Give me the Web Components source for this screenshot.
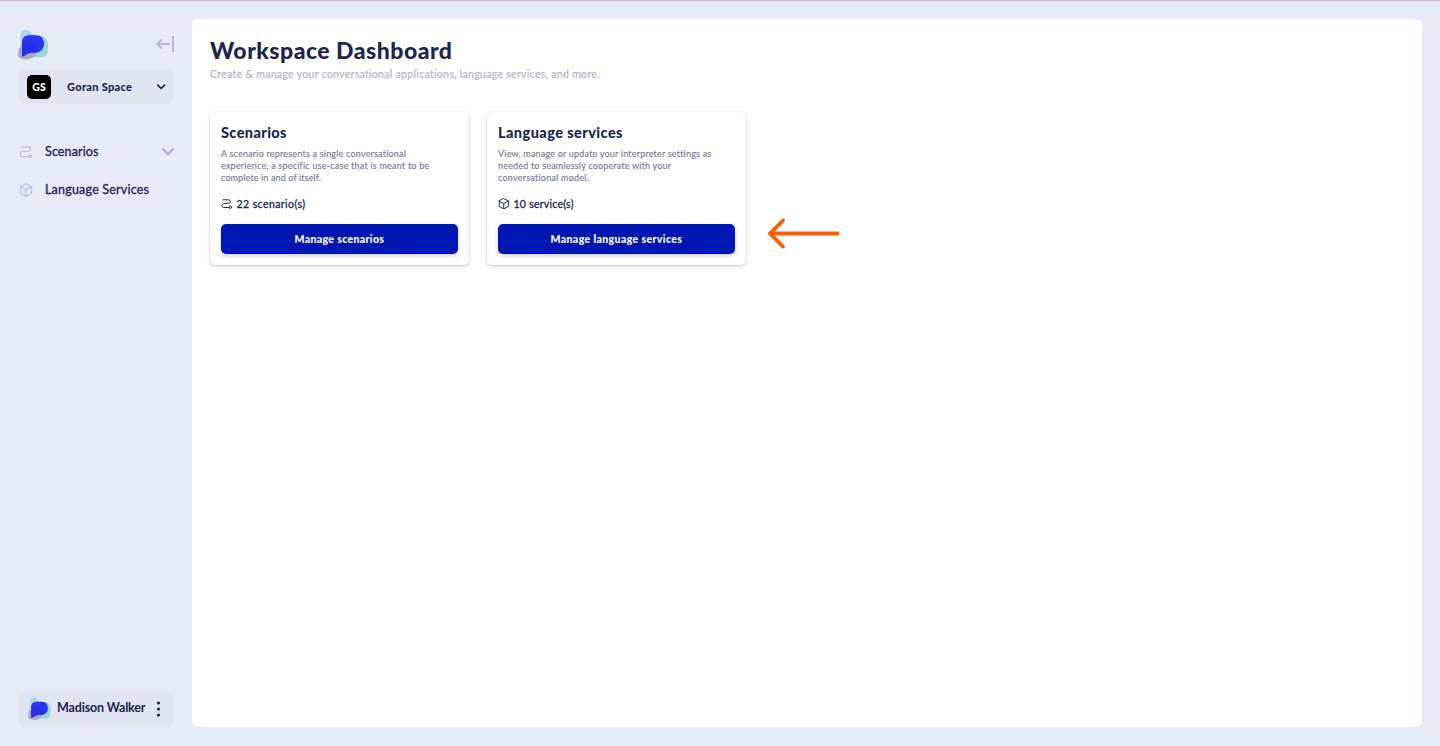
<!DOCTYPE html>
<html lang="en">
<head>
<meta charset="utf-8">
<title>Workspace Dashboard</title>
<style>
html,body{margin:0;height:100%;overflow:hidden}
body{font-family:Lato,"Open Sans",sans-serif;color:#1b264f;background:#e7ebf7}
</style>
</head>
<body>
<app-shell>
  <side-bar slot="side">
    <workspace-picker slot="top" initials="GS"><fit-text width="65">Goran Space</fit-text></workspace-picker>
    <nav-item icon="route" expandable><fit-text width="53.5">Scenarios</fit-text></nav-item>
    <nav-item icon="cube"><fit-text width="104">Language Services</fit-text></nav-item>
    <user-box slot="bottom"><fit-text width="88.5">Madison Walker</fit-text></user-box>
  </side-bar>
  <page-header><fit-text width="242">Workspace Dashboard</fit-text><fit-text slot="sub" width="390">Create &amp; manage your conversational applications, language services, and more.</fit-text></page-header>
  <card-row>
    <info-card icon="route">
      <fit-text slot="title" width="65.5">Scenarios</fit-text>
      <fit-text width="185">A scenario represents a single conversational</fit-text>
      <fit-text width="208">experience, a specific use-case that is meant to be</fit-text>
      <fit-text width="100">complete in and of itself.</fit-text>
      <fit-text slot="count" width="68.5">22 scenario(s)</fit-text>
      <fit-text slot="action" width="89.5">Manage scenarios</fit-text>
    </info-card>
    <info-card icon="cube">
      <fit-text slot="title" width="124.5">Language services</fit-text>
      <fit-text width="213">View, manage or update your interpreter settings as</fit-text>
      <fit-text width="173">needed to seamlessly cooperate with your</fit-text>
      <fit-text width="91">conversational model.</fit-text>
      <fit-text slot="count" width="60">10 service(s)</fit-text>
      <fit-text slot="action" width="131.5">Manage language services</fit-text>
    </info-card>
    <pointer-arrow></pointer-arrow>
  </card-row>
</app-shell>
<script>
const define = (name, html, init) => {
  const t = document.createElement('template');
  t.innerHTML = html;
  customElements.define(name, class extends HTMLElement {
    connectedCallback() {
      if (this.shadowRoot) return;
      this.attachShadow({mode: 'open'}).append(t.content.cloneNode(true));
      if (init) init(this, this.shadowRoot);
    }
  });
};

const GLYPHS = {
  cube: '<path d="M7 .7 12.600 3.700v6.600L7 13.300 1.400 10.300V3.700ZM1.400 3.700 7 6.800l5.600-3.100M7 6.800v6.500"/>',
  route: '<path d="M2.800 2.200h6.400a1.900 1.900 0 0 1 0 4.300H3.300a2.600 2.600 0 0 0 0 5.100H9.800"/><circle cx="11.300" cy="11.300" r="1.500"/>'
};
customElements.define('line-icon', class extends HTMLElement {
  static observedAttributes = ['name'];
  constructor() {
    super();
    this.attachShadow({mode: 'open'}).innerHTML = '<style>:host{display:block}svg{display:block;width:100%;height:100%;fill:none;stroke:currentColor;stroke-width:var(--stroke,1.2);stroke-linecap:round;stroke-linejoin:round}</style><svg viewBox="0 0 14 14"></svg>';
  }
  attributeChangedCallback(_, __, value) {
    this.shadowRoot.querySelector('svg').innerHTML = GLYPHS[value] || '';
  }
});

define('app-shell', `<style>
:host{display:flex;box-sizing:border-box;width:1440px;height:746px;border-top:1px solid #d4b9c8;border-bottom:1px solid #f3f5fb;background:#e7ebf7}
main{box-sizing:border-box;width:1230px;height:708px;margin-top:18px;padding:17px 18px;border-radius:6px;background:#fff}
</style><slot name="side"></slot><main><slot></slot></main>`);

define('side-bar', `<style>
:host{display:flex;flex-direction:column;box-sizing:border-box;width:192px;height:100%;padding:28px 18px 18px}
header{display:flex;justify-content:space-between;height:41px}
header svg{display:block;margin-top:7px}
nav{flex:1;padding-top:29.500px}
</style>
<header><brand-mark></brand-mark>
<svg width="19" height="17" viewBox="0 0 19 17" fill="none" stroke="#b6b3d4" stroke-width="2"><path d="M14.300 8H2.500M6.300 4.200 2.200 8l4.100 3.800" stroke-linecap="round" stroke-linejoin="round"/><path d="M18 0v16"/></svg></header>
<slot name="top"></slot><nav><slot></slot></nav><slot name="bottom"></slot>`);

define('brand-mark', `<style>:host{display:block;width:30px;height:31px}svg{display:block;width:100%;height:100%}</style>
<svg viewBox="0 0 30 31">
<path d="M4.2 1.5C8.5-1.5 12 3 16 5.8c4.6 3.2 6.6 8.5 2.6 13C15 22.8 7 21 4 16 1.7 12 1.8 4.3 4.2 1.5Z" fill="#aed3f3"/>
<path d="M21.500 7.600C27 6 30 11 30 17c0 7-1.200 11-6 11.200C17.600 29 13 27 14 21Z" fill="#9dd6d5"/>
<path d="M4.2 15.500C9 13 17 16 18.600 21c2 5.600-4.500 9.300-10.500 9.300C3 30.300 0 29 0 25.500c0-4 1.500-8 4.200-10Z" fill="#aaa8c8"/>
<path d="M4 27.500V13C4 8.500 7 6.200 11.500 6.200h7c4.800 0 7.500 3.700 7.500 8.600 0 5.200-3.500 8.900-9 8.900h-4C9 23.900 6.800 27.500 4 27.500Z" fill="#2c35f4"/>
<path d="M4 27.500V13.500c6-3.500 14 .5 14.800 7 .1 1 .1 2 0 3.100H13C9 23.900 6.800 27.500 4 27.500Z" fill="#2329e6" opacity=".6"/>
<path d="M13 13c5-2 9 2 12 5-1.500 3.500-4 5.500-8 5.500h-3c-2-3-3-7-1-10.500Z" fill="#1c3bdc" opacity=".3"/>
</svg>`);

define('workspace-picker', `<style>
:host{display:flex;align-items:center;box-sizing:border-box;height:34px;padding:0 8px 0 9px;border-radius:6px;background:#dfe5f1;font:900 11px/14px Lato,sans-serif}
i{font:900 10.500px/24px Lato,sans-serif;width:24px;height:24px;margin-right:16px;border-radius:5px;background:#000;color:#fff;text-align:center}
svg{margin-left:auto}
</style><i></i><slot></slot><svg width="10" height="8" viewBox="0 0 10 8" fill="none" stroke="#1b264f" stroke-width="1.700" stroke-linecap="round" stroke-linejoin="round"><path d="M1.800 2.200 5.200 5.500 8.600 2.200"/></svg>`,
(h, r) => r.querySelector('i').textContent = h.getAttribute('initials'));

define('nav-item', `<style>
:host{display:flex;align-items:center;height:37.500px;font-size:12.500px;line-height:16px;-webkit-text-stroke:.3px currentColor}
line-icon{width:14px;height:14px;margin:0 12px 0 1px;color:#bebcda}
svg{margin-left:auto}
</style><line-icon></line-icon><slot></slot>`,
(h, r) => {
  r.querySelector('line-icon').setAttribute('name', h.getAttribute('icon'));
  if (h.hasAttribute('expandable')) r.append(document.createRange().createContextualFragment('<svg width="12" height="8" viewBox="0 0 12 8" fill="none" stroke="#b3b0d2" stroke-width="2.500" stroke-linecap="round" stroke-linejoin="round"><path d="M1.300 1.500 6 6.100l4.700-4.600"/></svg>'));
});

define('user-box', `<style>
:host{display:flex;align-items:center;box-sizing:border-box;height:36px;padding:0 13px 0 10px;border-radius:6px;background:#dfe5f1;font-weight:700;font-size:12.500px;line-height:16px}
brand-mark{width:23px;height:23.500px;margin-right:6px}
::slotted(*){margin-bottom:2px}
svg{margin-left:auto}
</style><brand-mark></brand-mark><slot></slot><svg width="5" height="16" viewBox="0 0 5 16" fill="#1b264f"><circle cx="2.500" cy="2" r="1.600"/><circle cx="2.500" cy="8" r="1.600"/><circle cx="2.500" cy="14" r="1.600"/></svg>`);

define('page-header', `<style>
:host{display:block;height:75.500px}
h1{margin:0;font:900 23px/28px Lato,sans-serif;height:30px}
p{margin:0;font-size:10.500px;line-height:17px;color:#b6b3d1;-webkit-text-stroke:.2px currentColor}
</style><h1><slot></slot></h1><p><slot name="sub"></slot></p>`);

define('card-row', `<style>:host{display:flex;gap:18px}</style><slot></slot>`);

define('info-card', `<style>
:host{display:block;box-sizing:border-box;width:259px;height:153.500px;padding:11px;border-radius:5px;background:#fff;box-shadow:0 1px 3px rgba(40,45,90,.24),0 1px 2px rgba(40,45,90,.08)}
h2{margin:0 0 5px;font:900 14.500px/20px Lato,sans-serif}
p{display:flex;flex-direction:column;align-items:flex-start;margin:0;font-size:9px;line-height:12px;color:#777d9b;-webkit-text-stroke:.15px currentColor}
div{display:flex;align-items:center;gap:4px;height:14px;margin:13px 0;font-size:10.500px;line-height:14px;-webkit-text-stroke:.3px currentColor}
line-icon{width:11.500px;height:11.500px}
button{display:flex;align-items:center;justify-content:center;width:236.500px;height:30px;padding:0;border:0;border-radius:5px;background:#0017b5;color:#fff;font:900 10.500px/14px Lato,sans-serif;box-shadow:0 2px 4px rgba(40,45,90,.22)}
</style><h2><slot name="title"></slot></h2><p><slot></slot></p><div><line-icon></line-icon><slot name="count"></slot></div><button><slot name="action"></slot></button>`,
(h, r) => r.querySelector('line-icon').setAttribute('name', h.getAttribute('icon')));

define('pointer-arrow', `<style>:host{display:block;margin:106.500px 0 0 4px}svg{display:block}</style>
<svg width="72" height="31" viewBox="0 0 72 31" fill="none" stroke="#ff5c00" stroke-width="4"><path d="M71 15.500H2.500"/><path d="M15 2.500 2 15.500l13 13" stroke-width="3.800" stroke-linecap="round" stroke-linejoin="round"/></svg>`);

/* Tracks a single line of text out to its intended measure. */
define('fit-text', `<style>:host{display:inline-block;white-space:nowrap;font-kerning:normal}span{display:inline-block}</style><span><slot></slot></span>`,
(h, r) => {
  const s = r.querySelector('span'), n = h.textContent.length, w = +h.getAttribute('width');
  const natural = s.getBoundingClientRect().width;
  s.style.letterSpacing = (w - natural) / (n - 1) + 'px';
  s.style.marginRight = -(w - natural) / (n - 1) + 'px';
});
</script>
</body>
</html>
